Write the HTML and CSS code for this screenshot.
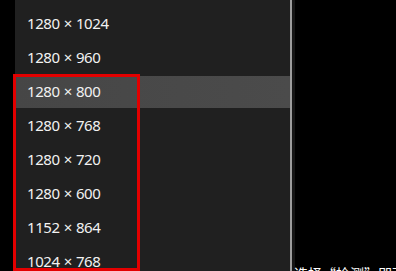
FILE: index.html
```html
<!DOCTYPE html>
<html lang="zh">
<head>
<meta charset="utf-8">
<link rel="stylesheet" href="styles.css">
</head>
<body>
<div class="screen">
  <div class="gutter"></div>
  <div class="menu">
    <div class="item"><span class="label">1280 × 1024</span></div>
    <div class="item"><span class="label">1280 × 960</span></div>
    <div class="item active"><span class="label">1280 × 800</span></div>
    <div class="item"><span class="label">1280 × 768</span></div>
    <div class="item"><span class="label">1280 × 720</span></div>
    <div class="item"><span class="label">1280 × 600</span></div>
    <div class="item"><span class="label">1152 × 864</span></div>
    <div class="item"><span class="label">1024 × 768</span></div>
  </div>
  <div class="scrollbar"></div>
  <div class="shadow"></div>
  <div class="desktop">
    <p class="hint">选择“检测”即可查看</p>
  </div>
  <div class="annot"></div>
</div>
</body>
</html>
```
FILE: styles.css
```css
* { box-sizing: border-box; }
html, body {
  margin: 0;
  padding: 0;
  background: #000;
  width: 396px;
  height: 271px;
  overflow: hidden;
}
.screen {
  position: relative;
  display: flex;
  width: 396px;
  height: 271px;
  overflow: hidden;
  font-family: "Noto Sans", "Noto Sans CJK SC", sans-serif;
}
.gutter {
  width: 15px;
  flex: none;
  background: #000;
}
.menu {
  width: 275px;
  flex: none;
  background: #202020;
  padding-top: 7px;
  display: flex;
  flex-direction: column;
}
.item {
  height: 34px;
  flex: none;
  padding: 1px 0;
  display: flex;
}
.label {
  flex: 1;
  display: flex;
  align-items: center;
  padding-left: 12px;
  padding-bottom: 2px;
  color: #f2f2f2;
  font-size: 15px;
  letter-spacing: -0.4px;
  word-spacing: 0.5px;
}
.item.active .label {
  background: linear-gradient(to right, #464646, #4b4b4b);
}
.scrollbar {
  width: 2px;
  flex: none;
  background: #9d9d9d;
}
.shadow {
  width: 3px;
  flex: none;
  background: #151515;
}
.desktop {
  flex: 1;
  padding-top: 263px;
}
.hint {
  margin: 0;
  color: #fff;
  font-family: "Noto Sans CJK SC", sans-serif;
  font-size: 14px;
  line-height: 20px;
  white-space: nowrap;
  margin-left: -1px;
}
.annot {
  position: absolute;
  left: 13px;
  top: 74px;
  width: 127px;
  height: 197px;
  border: 3px solid #e30000;
}
```
